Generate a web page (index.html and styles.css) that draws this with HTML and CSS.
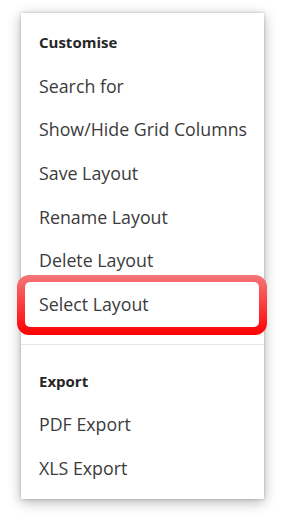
FILE: index.html
```html
<!doctype html>
<html lang="en">
  <head>
    <meta charset="UTF-8" />
    <meta name="viewport" content="width=device-width, initial-scale=1.0" />
    <title>Grid menu</title>
    <link rel="stylesheet" href="styles.css">
  </head>
  <body>
    <div class="menu">
      <div class="group group-first">
        <div class="group-title">Customise</div>
        <div class="item">Search for</div>
        <div class="item">Show/Hide Grid Columns</div>
        <div class="item">Save Layout</div>
        <div class="item">Rename Layout</div>
        <div class="item">Delete Layout</div>
        <div class="item item-marked">
          <span class="marker"></span>
          <span class="label">Select Layout</span>
        </div>
      </div>
      <div class="group group-last">
        <div class="group-title">Export</div>
        <div class="item">PDF Export</div>
        <div class="item">XLS Export</div>
      </div>
    </div>
  </body>
</html>
```

FILE: styles.css
```css
:root {
  --text: #3b3b3b;
  --title: #262626;
  --divider: #e6e6e6;
  --mark-top: #f4767a;
  --mark-bottom: #ff0000;
}

* {
  margin: 0;
  padding: 0;
  box-sizing: border-box;
}

body {
  font-family: "Open Sans", "Noto Sans", sans-serif;
  background: #fff;
  color: var(--text);
  padding: 13px 18px 22px 21px;
}

.menu {
  width: 243px;
  height: 486px;
  background: #fff;
  box-shadow:
    0 3px 12px rgba(0, 0, 0, 0.3),
    0 0 3px rgba(0, 0, 0, 0.2);
}

.group-first {
  padding: 7px 0 18px;
  border-bottom: 1px solid var(--divider);
}

.group-last {
  padding: 14px 0 9px;
}

.group-title,
.item {
  height: 43.7px;
  display: flex;
  align-items: center;
  padding: 0 0 0 18px;
  white-space: nowrap;
}

.group-title {
  font-size: 15px;
  font-weight: 700;
  color: var(--title);
}

.item {
  font-size: 17.8px;
  color: var(--text);
}

.item-marked {
  position: relative;
}

.marker {
  position: absolute;
  top: -7px;
  bottom: -9px;
  left: -4px;
  right: -3px;
  border-radius: 12px;
  padding: 7px 8px 8px 8px;
  background: linear-gradient(180deg, var(--mark-top) 0%, var(--mark-bottom) 100%);
}

.marker::before {
  content: "";
  display: block;
  height: 100%;
  background: #fff;
  border-radius: 5px;
}

.label {
  position: relative;
}
```
